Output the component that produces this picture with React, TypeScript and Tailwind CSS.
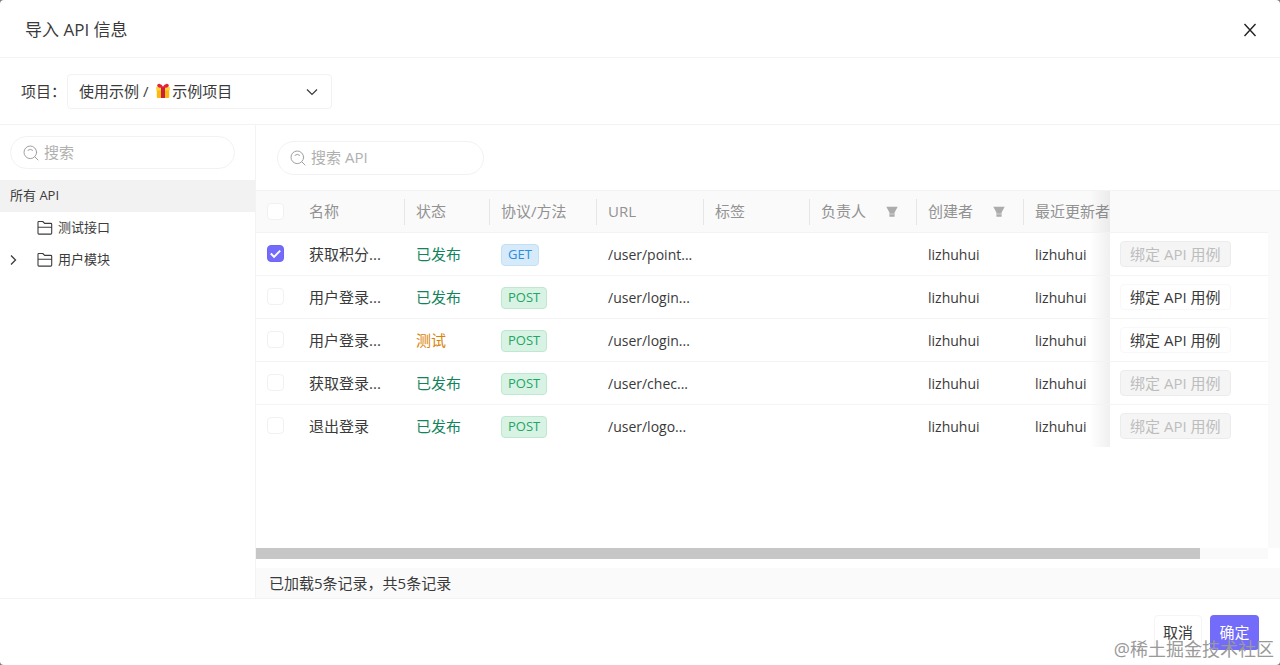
interface ApiRow {
  id: number;
  name: string;
  status: '已发布' | '测试';
  method: 'GET' | 'POST';
  url: string;
  creator: string;
  updater: string;
  canBind: boolean;
  checked: boolean;
}

const rows: ApiRow[] = [
  { id: 1, name: '获取积分...', status: '已发布', method: 'GET', url: '/user/point...', creator: 'lizhuhui', updater: 'lizhuhui', canBind: false, checked: true },
  { id: 2, name: '用户登录...', status: '已发布', method: 'POST', url: '/user/login...', creator: 'lizhuhui', updater: 'lizhuhui', canBind: true, checked: false },
  { id: 3, name: '用户登录...', status: '测试', method: 'POST', url: '/user/login...', creator: 'lizhuhui', updater: 'lizhuhui', canBind: true, checked: false },
  { id: 4, name: '获取登录...', status: '已发布', method: 'POST', url: '/user/chec...', creator: 'lizhuhui', updater: 'lizhuhui', canBind: false, checked: false },
  { id: 5, name: '退出登录', status: '已发布', method: 'POST', url: '/user/logo...', creator: 'lizhuhui', updater: 'lizhuhui', canBind: false, checked: false },
];

const columns = [
  { title: '名称', filter: false },
  { title: '状态', filter: false },
  { title: '协议/方法', filter: false },
  { title: 'URL', filter: false },
  { title: '标签', filter: false },
  { title: '负责人', filter: true },
  { title: '创建者', filter: true },
  { title: '最近更新者', filter: false },
];

const statusClass = {
  已发布: 'text-[#11845b]',
  测试: 'text-[#d98208]',
};

const methodClass = {
  GET: 'border-[#c3e0f6] bg-[#d6eafa] text-[#2b8ee0]',
  POST: 'border-[#bfe8d1] bg-[#d8f2e4] text-[#22a565]',
};

function SearchIcon() {
  return (
    <svg className="h-4 w-4 shrink-0 text-[#a0a0a0]" viewBox="0 0 16 16" fill="none" stroke="currentColor" strokeLinecap="round">
      <circle cx="7.3" cy="7.3" r="6.3" />
      <path d="M12 12l3 3M5 5.2a3.6 3.6 0 0 1 4.6 0" />
    </svg>
  );
}

function FolderIcon() {
  return (
    <svg className="h-4 w-4 shrink-0 text-[#3c3c3c]" viewBox="0 0 16 16" fill="none" stroke="currentColor" strokeWidth="1.1" strokeLinejoin="round">
      <path d="M1 13.2V2.2q0-.7.7-.7h4.1L7.6 3.4h6.2q.9 0 .9.9v8.9q0 .9-.9.9H1.9q-.9 0-.9-.9zM1 7.3h13.7" />
    </svg>
  );
}

function FilterIcon() {
  return (
    <svg className="h-3 w-3 shrink-0 text-[#acacac]" viewBox="0 0 12 12" fill="currentColor">
      <path d="M.3.800h11.400L8.600 6.600v4.200H3.400V6.600z" />
      <path d="M3.400 8h5.200" stroke="#fafafa" strokeWidth=".5" />
    </svg>
  );
}

function GiftIcon() {
  return (
    <svg className="pointer-events-none absolute top-[9px] left-[88px] h-4 w-4" viewBox="0 0 16 16">
      <path d="M1.8 5.5h12.4V14a1 1 0 0 1-1 1H2.8a1 1 0 0 1-1-1z" fill="#fdb913" />
      <path d="M1.2 4h13.6v3.4H1.2z" fill="#ffd43b" />
      <path d="M6 4h4v11H6z" fill="#c8203a" />
      <path d="M8 4.6C6.6 5 3.4 5 2.4 3.6 1.6 2 3 .6 4.8.9 6.4 1.2 7.5 2.6 8 3.8 8.5 2.6 9.6 1.2 11.2.9 13 .6 14.4 2 13.6 3.6 12.6 5 9.4 5 8 4.6z" fill="#e5243b" />
    </svg>
  );
}

function Check({ id, label, checked }: { id: string; label: string; checked: boolean }) {
  return (
    <span className="relative ml-[11px] block h-[17px] w-[17px]">
      <input
        id={id}
        type="checkbox"
        aria-label={label}
        defaultChecked={checked}
        className="peer block h-[17px] w-[17px] appearance-none rounded border border-[#f1f1f1] bg-white checked:border-[#6f66f7] checked:bg-[#736bfa]"
      />
      <svg
        className="pointer-events-none absolute top-0 left-0 hidden h-[17px] w-[17px] peer-checked:block"
        viewBox="0 0 18 18"
        fill="none"
        stroke="#fff"
        strokeWidth="2"
      >
        <path d="M4 9l3.5 3.5L14 6" />
      </svg>
    </span>
  );
}

function Sidebar() {
  return (
    <aside className="w-64 shrink-0 border-r border-[#f3f3f3] text-[13px] text-[#3c3c3c]">
      <label className="mt-[11px] mr-5 mb-[11px] ml-[10px] flex h-[33px] items-center gap-[5px] rounded-full border border-[#f2f2f2] px-3">
        <SearchIcon />
        <input aria-label="搜索" placeholder="搜索" className="min-w-0 flex-1 text-[15px] outline-none placeholder:text-[#b0b0b0]" />
      </label>
      <nav>
        <a href="#all" className="flex h-8 items-center bg-[#f2f2f2] px-[10px]">所有 API</a>
        <a href="#test" className="flex h-8 items-center gap-[5px] pl-[37px]">
          <FolderIcon />
          测试接口
        </a>
        <a href="#user" className="flex h-8 items-center gap-[5px] pl-2">
          <svg className="mr-3 h-3 w-3" viewBox="0 0 12 12" fill="none" stroke="currentColor" strokeWidth="1.3">
            <path d="M3 1.5L7.5 6 3 10.5" />
          </svg>
          <FolderIcon />
          用户模块
        </a>
      </nav>
    </aside>
  );
}

function ApiTable() {
  return (
    <table className="w-full table-fixed border-separate border-spacing-0 text-left">
      <colgroup>
        <col className="w-[42px]" />
        <col className="w-[106px]" />
        <col className="w-[85px]" />
        <col className="w-[107px]" />
        <col className="w-[107px]" />
        <col className="w-[106px]" />
        <col className="w-[107px]" />
        <col className="w-[107px]" />
        <col className="w-[87px]" />
        <col />
      </colgroup>
      <thead>
        <tr className="h-[42px] bg-[#fafafa] text-[#929292]">
          <th className="border-b border-[#f3f3f3] p-0">
            <Check id="all-rows" label="全选" checked={false} />
          </th>
          {columns.map((col, i) => (
            <th key={col.title} className="border-b border-[#f3f3f3] p-0 font-normal whitespace-nowrap">
              <div className={i === 0 ? 'flex h-[26px] items-center pl-[11px]' : 'flex h-[26px] items-center border-l border-[#e6e6e6] pl-[11px]'}>
                {col.title}
                {col.filter && (
                  <button aria-label={`筛选${col.title}`} className="mr-[18px] ml-auto">
                    <FilterIcon />
                  </button>
                )}
              </div>
            </th>
          ))}
          <th aria-label="操作" className="relative border-b border-[#f3f3f3] bg-[#fafafa] p-0 before:absolute before:inset-y-0 before:right-full before:w-5 before:bg-linear-to-r before:from-transparent before:to-black/6" />
        </tr>
      </thead>
      <tbody>
        {rows.map((row) => (
          <tr key={row.id} className="h-[43px] [&>td]:border-b [&>td]:border-[#f4f4f4] last:[&>td]:border-transparent">
            <td className="p-0 pb-[2px]">
              <Check id={`row-${row.id}`} label={row.name} checked={row.checked} />
            </td>
            <td className="p-0 pl-[11px] whitespace-nowrap">{row.name}</td>
            <td className={`p-0 pl-3 ${statusClass[row.status]}`}>{row.status}</td>
            <td className="p-0 pt-[2px] pl-3">
              <span className={`flex h-[22px] w-fit items-center rounded border px-[6px] text-[13px] ${methodClass[row.method]}`}>{row.method}</span>
            </td>
            <td className="p-0 pl-3 text-[14px] whitespace-nowrap">{row.url}</td>
            <td />
            <td />
            <td className="p-0 pl-3 text-[14px]">{row.creator}</td>
            <td className="p-0 pl-3 text-[14px]">{row.updater}</td>
            <td className="relative bg-white p-0 pl-[10px] before:absolute before:inset-y-0 before:right-full before:w-5 before:bg-linear-to-r before:from-transparent before:to-black/6">
              <button
                disabled={!row.canBind}
                className="h-[26px] rounded border border-[#f8f8f8] bg-white px-[9px] whitespace-nowrap disabled:border-[#ececec] disabled:bg-[#f5f5f5] disabled:text-[#bdbdbd]"
              >
                绑定 API 用例
              </button>
            </td>
          </tr>
        ))}
      </tbody>
    </table>
  );
}

export default function App() {
  return (
    <div className="bg-[#777]">
      <div className="relative flex min-h-screen flex-col rounded bg-white font-['Open_Sans','Noto_Sans_CJK_SC',sans-serif] text-[15px] text-[#3a3a3a]">
        <header className="flex h-[58px] items-center justify-between border-b border-[#f3f3f3] pt-[2px] pr-[22px] pl-[25px]">
          <h1 className="text-[17px]">
            导入 <span className="font-medium">API</span> 信息
          </h1>
          <button aria-label="关闭" className="text-[#222]">
            <svg className="h-4 w-4" viewBox="0 0 16 16" fill="none" stroke="currentColor" strokeWidth="1.4">
              <path d="M2.5 2L13.5 14M13.5 2L2.5 14" />
            </svg>
          </button>
        </header>

        <div className="flex h-[67px] items-center border-b border-[#f3f3f3] pl-[21px]">
          <label htmlFor="project" className="w-[46px]">项目：</label>
          <div className="relative w-[265px]">
            <select id="project" className="h-[35px] w-full appearance-none rounded border border-[#f2f2f2] bg-white pl-[11px]">
              <option>{'使用示例 / \u2003\u2004示例项目'}</option>
            </select>
            <GiftIcon />
            <svg className="pointer-events-none absolute top-3 right-[14px] h-3 w-3" viewBox="0 0 12 12" fill="none" stroke="currentColor" strokeWidth="1.2">
              <path d="M1 3.5l5 5 5-5" />
            </svg>
          </div>
        </div>

        <div className="flex flex-1">
          <Sidebar />
          <main className="flex min-w-0 flex-1 flex-col">
            <div className="flex h-[66px] items-center border-b border-[#f3f3f3] pl-[21px]">
              <label className="flex h-[34px] w-[207px] items-center gap-[5px] rounded-full border border-[#f2f2f2] px-3">
                <SearchIcon />
                <input aria-label="搜索 API" placeholder="搜索 API" className="min-w-0 flex-1 outline-none placeholder:text-[#b0b0b0]" />
              </label>
            </div>
            <div className="flex flex-1">
              <div className="min-w-0 flex-1">
                <ApiTable />
              </div>
              <div className="w-3 bg-[#fafafa]" />
            </div>
            {/* horizontal scroll track */}
            <div className="mr-3 mb-[9px] h-[11px] bg-[#fafafa] pr-[68px]">
              <div className="h-full bg-[#c6c6c6]" />
            </div>
            <div className="flex h-[30px] items-center bg-[#fafafa] pl-[13px]">已加载5条记录，共5条记录</div>
          </main>
        </div>

        <footer className="flex h-[67px] items-center justify-end gap-2 border-t border-[#f3f3f3] pr-[21px]">
          <button className="h-[35px] w-12 rounded border border-[#f5f5f5] bg-white">取消</button>
          <button className="h-[35px] w-[49px] rounded bg-[#736bfa] text-white">确定</button>
        </footer>
        <span className="pointer-events-none absolute right-[6px] bottom-1 text-[18px] leading-6 text-[#999]">@稀土掘金技术社区</span>
      </div>
    </div>
  );
}
